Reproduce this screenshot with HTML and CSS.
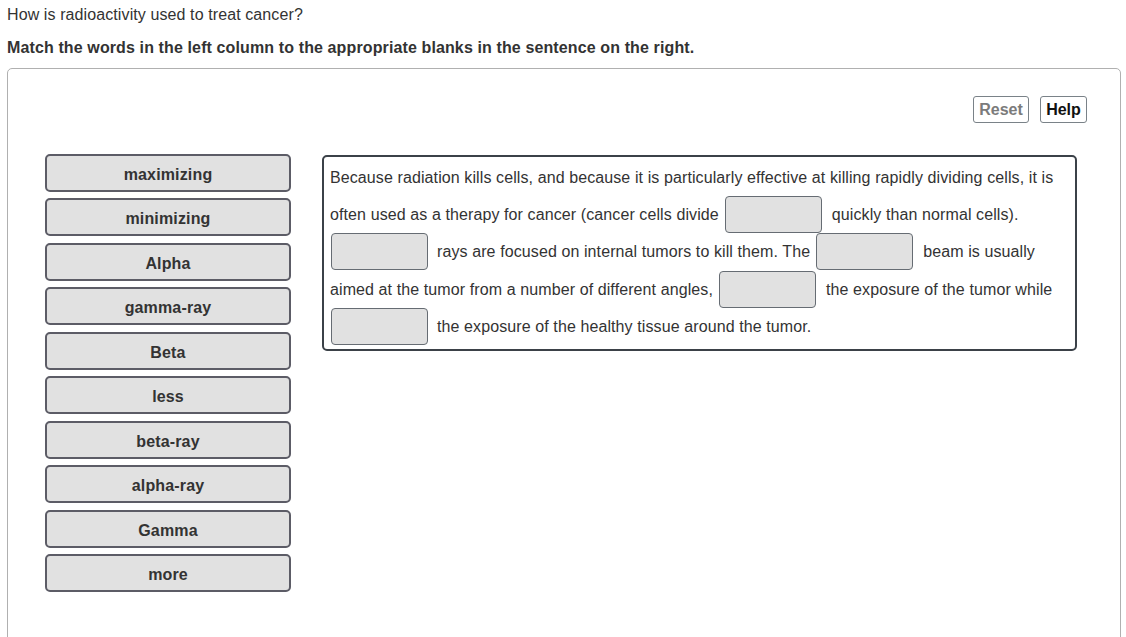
FILE: index.html
```html
<!DOCTYPE html>
<html>
<head>
<meta charset="utf-8">
<link rel="stylesheet" href="styles.css">
</head>
<body>
<div class="page">
  <p class="question">How is radioactivity used to treat cancer?</p>
  <p class="instruction">Match the words in the left column to the appropriate blanks in the sentence on the right.</p>
  <div class="panel">
    <div class="toolbar">
      <button class="tool reset">Reset</button>
      <button class="tool help">Help</button>
    </div>
    <div class="workarea">
      <div class="words">
        <div class="word">maximizing</div>
        <div class="word">minimizing</div>
        <div class="word">Alpha</div>
        <div class="word">gamma-ray</div>
        <div class="word">Beta</div>
        <div class="word">less</div>
        <div class="word">beta-ray</div>
        <div class="word">alpha-ray</div>
        <div class="word">Gamma</div>
        <div class="word">more</div>
      </div>
      <div class="sentence">
        <div class="line"><span>Because radiation kills cells, and because it is particularly effective at killing rapidly dividing cells, it is</span></div>
        <div class="line"><span>often used as a therapy for cancer (cancer cells divide</span><span class="blank b1"></span><span>quickly than normal cells).</span></div>
        <div class="line"><span class="blank first"></span><span>rays are focused on internal tumors to kill them. The</span><span class="blank b2"></span><span>beam is usually</span></div>
        <div class="line l4"><span>aimed at the tumor from a number of different angles,</span><span class="blank b3"></span><span>the exposure of the tumor while</span></div>
        <div class="line"><span class="blank first"></span><span>the exposure of the healthy tissue around the tumor.</span></div>
      </div>
    </div>
  </div>
</div>
</body>
</html>
```
FILE: styles.css
```css
html, body {
  margin: 0;
  padding: 0;
  background: #fff;
}
body {
  font-family: "Liberation Sans", Arial, sans-serif;
  color: #333;
}
.page {
  padding: 0 5px 0 7px;
}
.question {
  margin: 0;
  padding-top: 6px;
  font-size: 16px;
  letter-spacing: 0.1px;
  line-height: 18px;
  color: #333;
}
.instruction {
  margin: 15px 0 0 0;
  font-size: 16px;
  letter-spacing: 0.12px;
  line-height: 18px;
  font-weight: bold;
  color: #333;
}
.panel {
  margin-top: 11px;
  border: 1px solid #b0b0b0;
  border-radius: 5px;
  height: 580px;
  box-sizing: border-box;
}
.toolbar {
  display: flex;
  justify-content: flex-end;
  gap: 11px;
  padding: 27px 33px 0 0;
}
.tool {
  font-family: "Liberation Sans", Arial, sans-serif;
  font-weight: bold;
  font-size: 16px;
  height: 27px;
  padding: 0 5px;
  background: #fff;
  border: 1px solid #7a8288;
  border-radius: 3px;
}
.reset { color: #7b7b7b; width: 56px; }
.help { color: #111; width: 47px; }
.workarea {
  display: flex;
  align-items: flex-start;
  margin-top: 31px;
  padding-left: 37px;
}
.words {
  display: flex;
  flex-direction: column;
  gap: 6.45px;
  width: 246px;
  flex: none;
}
.word {
  height: 38px;
  box-sizing: border-box;
  background: #e1e1e1;
  border: 2px solid #5c5c66;
  border-radius: 5px;
  font-weight: bold;
  font-size: 16px;
  letter-spacing: 0.15px;
  color: #333;
  text-align: center;
  line-height: 34px;
  padding-top: 2px;
}
.sentence {
  margin-left: 31px;
  margin-top: 1px;
  width: 755px;
  height: 196px;
  box-sizing: border-box;
  border: 2px solid #3b4148;
  border-radius: 5px;
  padding: 2px 0 0 6px;
  font-size: 16px;
  letter-spacing: 0.1px;
  color: #333;
}
.line {
  display: flex;
  align-items: center;
  height: 37px;
  white-space: nowrap;
}
.line.l4 {
  height: 38px;
  padding-top: 1px;
  box-sizing: border-box;
}
.blank {
  display: inline-block;
  width: 97px;
  height: 37px;
  box-sizing: border-box;
  background: #e1e1e1;
  border: 1px solid #666c73;
  border-radius: 4px;
  margin: 0 10px 0 6px;
  flex: none;
}
.blank.first {
  margin: 0 9px 0 1px;
}
```
